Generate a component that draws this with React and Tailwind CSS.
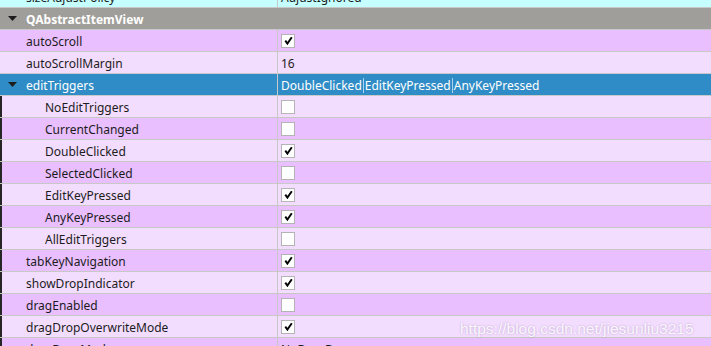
import React from 'react';

const rows = [
  { name: 'sizeAdjustPolicy', value: 'AdjustIgnored', kind: 'text', bg: 'bg-[#c6ffff]' },
  { name: 'QAbstractItemView', kind: 'header', bg: 'bg-[#a09e9a]', open: true },
  { name: 'autoScroll', kind: 'check', checked: true, bg: 'bg-[#e9bfff]' },
  { name: 'autoScrollMargin', value: '16', kind: 'text', bg: 'bg-[#f3ddff]' },
  { name: 'editTriggers', kind: 'flags', value: ['DoubleClicked', 'EditKeyPressed', 'AnyKeyPressed'], bg: 'bg-[#308cc6]', open: true, selected: true },
  { name: 'NoEditTriggers', kind: 'check', checked: false, child: true, bg: 'bg-[#f3ddff]' },
  { name: 'CurrentChanged', kind: 'check', checked: false, child: true, bg: 'bg-[#e9bfff]' },
  { name: 'DoubleClicked', kind: 'check', checked: true, child: true, bg: 'bg-[#f3ddff]' },
  { name: 'SelectedClicked', kind: 'check', checked: false, child: true, bg: 'bg-[#e9bfff]' },
  { name: 'EditKeyPressed', kind: 'check', checked: true, child: true, bg: 'bg-[#f3ddff]' },
  { name: 'AnyKeyPressed', kind: 'check', checked: true, child: true, bg: 'bg-[#e9bfff]' },
  { name: 'AllEditTriggers', kind: 'check', checked: false, child: true, bg: 'bg-[#f3ddff]' },
  { name: 'tabKeyNavigation', kind: 'check', checked: true, bg: 'bg-[#e9bfff]' },
  { name: 'showDropIndicator', kind: 'check', checked: true, bg: 'bg-[#f3ddff]' },
  { name: 'dragEnabled', kind: 'check', checked: false, bg: 'bg-[#e9bfff]' },
  { name: 'dragDropOverwriteMode', kind: 'check', checked: true, bg: 'bg-[#f3ddff]' },
  { name: 'dragDropMode', value: 'NoDragDrop', kind: 'text', bg: 'bg-[#e9bfff]' },
];

const Arrow = () => (
  <svg width="9" height="5" viewBox="0 0 9 5" className="shrink-0">
    <path d="M0 0 L9 0 L4.5 5 Z" fill="#1d1d1d" />
  </svg>
);

const CheckBox = ({ checked }) => (
  <div className="w-[14px] h-[14px] bg-white border border-[#b4b4b4] flex items-center justify-center">
    {checked && (
      <svg width="9" height="9" viewBox="0 0 9 9">
        <path d="M1.3 4.6 L3.4 7.6 L7.8 1.2" stroke="#000" strokeWidth="1.9" fill="none" strokeLinejoin="miter" />
      </svg>
    )}
  </div>
);

const App = () => {
  return (
    <div className="relative w-[711px] h-[346px] overflow-hidden bg-white" style={{ fontFamily: '"Noto Sans", sans-serif' }}>
      <div className="mt-[-14px]">
        {rows.map((row, i) => (
          <div
            key={i}
            className={`flex h-[22px] border-b border-[#c8c8c8] text-[12px] ${row.bg} ${i >= 5 ? 'shadow-[inset_2px_0_0_#262626]' : ''}`}
          >
            {row.kind === 'header' ? (
              <div className="flex items-center flex-1 pl-[8px]">
                <Arrow />
                <span className="ml-[9px] pt-[2px] font-bold text-white">{row.name}</span>
              </div>
            ) : (
              <>
                <div className="w-[278px] shrink-0 border-r border-[#c8c8c8] flex items-center">
                  {row.open ? (
                    <div className="flex items-center pl-[8px]">
                      <Arrow />
                      <span className={`ml-[9px] pt-[2px] ${row.selected ? 'text-white' : 'text-[#1c1c1c]'}`}>{row.name}</span>
                    </div>
                  ) : (
                    <span className={`${row.child ? 'pl-[45px]' : 'pl-[26px]'} pt-[2px] text-[#1c1c1c]`}>{row.name}</span>
                  )}
                </div>
                <div className="flex-1 flex items-center pl-[3px]">
                  {row.kind === 'check' && <CheckBox checked={row.checked} />}
                  {row.kind === 'text' && <span className="pt-[2px] text-[#1c1c1c]">{row.value}</span>}
                  {row.kind === 'flags' && (
                    <span className="pt-[2px] text-white flex items-center">
                      {row.value.map((v, j) => (
                        <React.Fragment key={j}>
                          {j > 0 && <span className="inline-block w-px h-[15px] bg-[#a9d3ee] mx-[1px]" />}
                          {v}
                        </React.Fragment>
                      ))}
                    </span>
                  )}
                </div>
              </>
            )}
          </div>
        ))}
      </div>
      <div
        className="absolute left-[460px] top-[317px] text-[15.5px] text-white/90 [text-shadow:0_0_2px_rgba(110,70,130,0.45)]"
        style={{ fontFamily: '"Liberation Sans", Arial, sans-serif' }}
      >
        https://blog.csdn.net/jiesunliu3215
      </div>
    </div>
  );
};

export default App;
